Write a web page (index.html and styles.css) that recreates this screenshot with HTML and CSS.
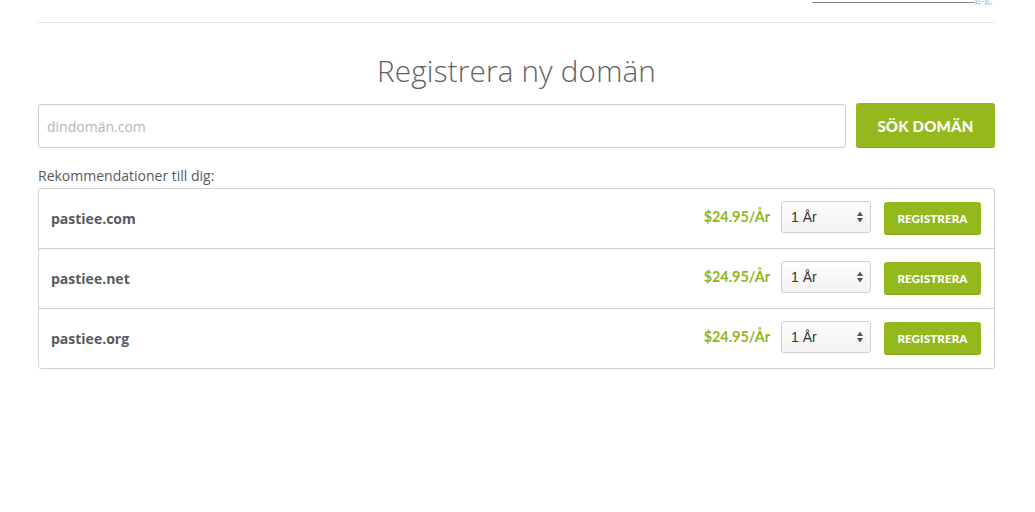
FILE: index.html
```html
<!DOCTYPE html>
<html lang="sv">
<head>
<meta charset="utf-8">
<title>Registrera ny domän</title>
<link rel="stylesheet" href="styles.css">
</head>
<body>
<div class="page">
  <div class="topbar">
    <div class="topbar-link"><span class="cut">g-g.</span></div>
  </div>
  <h1 class="title">Registrera ny domän</h1>
  <form class="search">
    <input class="search-input" type="text" placeholder="dindomän.com">
    <button class="search-btn" type="button">SÖK DOMÄN</button>
  </form>
  <p class="rec-label">Rekommendationer till dig:</p>
  <div class="rec-list">
    <div class="rec-row">
      <span class="domain">pastiee.com</span>
      <span class="price">$24.95/År</span>
      <div class="select"><span>1 År</span><svg class="arrows" width="8" height="14" viewBox="0 0 8 14"><path d="M4 1.5 L7 6 L1 6 Z M4 12.5 L7 8 L1 8 Z" fill="#555"/></svg></div>
      <button class="reg-btn" type="button">REGISTRERA</button>
    </div>
    <div class="rec-row">
      <span class="domain">pastiee.net</span>
      <span class="price">$24.95/År</span>
      <div class="select"><span>1 År</span><svg class="arrows" width="8" height="14" viewBox="0 0 8 14"><path d="M4 1.5 L7 6 L1 6 Z M4 12.5 L7 8 L1 8 Z" fill="#555"/></svg></div>
      <button class="reg-btn" type="button">REGISTRERA</button>
    </div>
    <div class="rec-row">
      <span class="domain">pastiee.org</span>
      <span class="price">$24.95/År</span>
      <div class="select"><span>1 År</span><svg class="arrows" width="8" height="14" viewBox="0 0 8 14"><path d="M4 1.5 L7 6 L1 6 Z M4 12.5 L7 8 L1 8 Z" fill="#555"/></svg></div>
      <button class="reg-btn" type="button">REGISTRERA</button>
    </div>
  </div>
</div>
</body>
</html>
```
FILE: styles.css
```css
* { box-sizing: border-box; }
html, body { margin: 0; padding: 0; background: #fff; }
body { font-family: "Open Sans", "Liberation Sans", sans-serif; color: #58595b; }
.page { width: 957px; margin-left: 38px; }
.topbar {
  height: 23px;
  border-bottom: 1px solid #e6e6e6;
  display: flex;
  justify-content: flex-end;
  padding-right: 20px;
}
.topbar-link {
  width: 163px;
  height: 3px;
  border-bottom: 1px solid #8a8a8a;
  position: relative;
}
.cut {
  position: absolute;
  right: -18px;
  top: -6px;
  font-size: 11px;
  line-height: 11px;
  color: #9fb7d3;
  clip-path: inset(5px 0 0 0);
}
.title {
  margin: 28px 0 0;
  text-align: center;
  font-weight: 300;
  font-size: 29.6px;
  line-height: 40px;
  color: #5d6166;
  letter-spacing: 0.2px;
}
.search { display: flex; gap: 10px; margin-top: 12px; align-items: center; }
.search-input {
  flex: 1;
  height: 44px;
  border: 1px solid #c9cbcd;
  border-radius: 3px;
  padding: 0 8px;
  font-family: "Open Sans", sans-serif;
  font-size: 14px;
  color: #555;
  margin-top: 1px;
}
.search-input::placeholder { color: #b5b5b5; }
.search-btn {
  width: 139px;
  height: 45px;
  border: none;
  border-radius: 3px;
  background: #95b81c;
  color: #fff;
  font-family: Lato, sans-serif;
  font-weight: 900;
  font-size: 15px;
  letter-spacing: 0.2px;
  box-shadow: inset 0 -1px 0 rgba(0,0,0,0.1);
}
.rec-label {
  margin: 18px 0 0;
  font-size: 14px;
  line-height: 19px;
  color: #555a60;
}
.rec-list {
  margin-top: 3px;
  border: 1px solid #cfd1d3;
  border-radius: 3px;
}
.rec-row {
  height: 60px;
  display: flex;
  align-items: center;
  padding: 0 13px 0 12px;
  border-top: 1px solid #cfd1d3;
}
.rec-row:first-child { border-top: none; height: 59px; }
.domain {
  flex: 1;
  font-weight: 700;
  font-size: 14px;
  color: #555b62;
}
.price {
  font-family: Lato, sans-serif;
  font-weight: 700;
  font-size: 14.4px;
  color: #8fb51b;
  margin-right: 11px;
  margin-top: -5px;
}
.select {
  width: 90px;
  height: 32px;
  border: 1px solid #cfd1d3;
  border-radius: 3px;
  background: linear-gradient(#fdfdfd, #f2f2f2);
  display: flex;
  align-items: center;
  justify-content: space-between;
  padding: 0 6px 0 9px;
  font-family: "Liberation Sans", Arial, sans-serif;
  font-size: 14px;
  color: #333;
  margin-top: -3px;
}
.select span { margin-top: -1px; }
.reg-btn {
  margin-left: 13px;
  width: 97px;
  height: 33px;
  border: none;
  border-radius: 3px;
  background: #95b81c;
  color: #fff;
  font-family: Lato, sans-serif;
  font-weight: 900;
  font-size: 11.6px;
  letter-spacing: 0.1px;
  margin-top: -1px;
  box-shadow: inset 0 -1px 0 rgba(0,0,0,0.1);
}
```
